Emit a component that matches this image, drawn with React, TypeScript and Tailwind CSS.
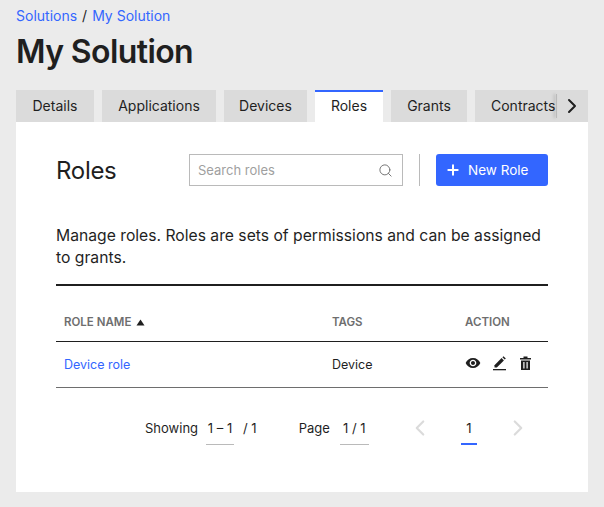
import { ChevronLeft, ChevronRight, Plus, Search } from "lucide-react";

function Tab({ label, width, active }: { label: string; width: string; active?: boolean }) {
  return (
    <div
      className={
        active
          ? `${width} h-8 shrink-0 flex items-center justify-center bg-white border-t-2 border-[#3366ff] text-[#1f1f1f] pb-[3px]`
          : `${width} h-8 shrink-0 flex items-center justify-center bg-[#dbdbdb] text-[#1f1f1f] pb-px`
      }
    >
      {label}
    </div>
  );
}

function App() {
  return (
    <div className="w-[604px] h-[507px] overflow-hidden bg-[#ebebeb] px-4 font-['Inter',sans-serif] text-[#1f1f1f]">
      <div className="pt-[7px] h-[26px] text-[14px] leading-[18px]">
        <span className="text-[#3366ff]">Solutions</span>
        <span className="mx-[5px]">/</span>
        <span className="text-[#3366ff]">My Solution</span>
      </div>
      <h1 className="mt-[4px] h-[60px] text-[32px] leading-[44px] font-semibold tracking-[-0.6px]">My Solution</h1>

      {/* tabs */}
      <div className="relative flex gap-2 text-[14px] w-[572px] overflow-hidden">
        <Tab label="Details" width="w-[78px]" />
        <Tab label="Applications" width="w-[114px]" />
        <Tab label="Devices" width="w-[83px]" />
        <Tab label="Roles" width="w-[68px]" active />
        <Tab label="Grants" width="w-[76px]" />
        <div className="w-[113px] h-8 shrink-0 flex items-center pl-4 pb-px bg-[#dbdbdb] overflow-hidden whitespace-nowrap">Contracts</div>
        <div className="absolute right-0 top-0 h-8 w-[32px] flex items-center justify-center bg-[#dbdbdb]">
          <div className="absolute left-0 top-[4px] h-[24px] w-px bg-[#bababa] shadow-[-2px_0_3px_rgba(0,0,0,0.25)]" />
          <ChevronRight size={24} strokeWidth={2} />
        </div>
      </div>

      {/* card */}
      <div className="w-[572px] h-[370px] bg-white px-10 pt-8">
        <div className="flex items-center h-8">
          <h2 className="mt-px text-[24px] leading-8 w-[133px] tracking-[-0.3px]">Roles</h2>
          <div className="w-[214px] h-8 flex items-center justify-between border border-[#bababa] pl-2 pr-[9px] text-[13px] text-[#9f9f9f]">
            <span className="mt-px">Search roles</span>
            <Search size={15} strokeWidth={1.5} className="text-[#6e6e6e]" />
          </div>
          <div className="ml-4 h-8 w-px bg-[#bababa]" />
          <button className="ml-4 w-[112px] h-8 flex items-center rounded-[3px] bg-[#3366ff] pl-[9px] text-[13.5px] text-white">
            <Plus size={16} strokeWidth={3} />
            <span className="ml-[7px] mt-px">New Role</span>
          </button>
        </div>

        <p className="mt-[39px] text-[15.7px] leading-[22px]">
          Manage roles. Roles are sets of permissions and can be assigned to grants.
        </p>

        <div className="mt-[15px] border-t-2 border-[#1f1f1f]">
          <div className="flex items-center h-[56px] pt-[18px] border-b border-[#1f1f1f] pl-2 text-[11.5px] font-semibold text-[#6e6e6e]">
            <div className="w-[268px] flex items-center">
              ROLE NAME
              <svg width="9" height="7" viewBox="0 0 9 7" className="ml-[5px]">
                <path d="M4.5 0.5 L8.5 6.5 L0.5 6.5 Z" fill="#1f1f1f" />
              </svg>
            </div>
            <div className="w-[133px]">TAGS</div>
            <div>ACTION</div>
          </div>
          <div className="flex items-center h-[46px] border-b border-[#6e6e6e] pl-2 text-[12.5px]">
            <div className="mt-[2px] w-[268px] text-[#3366ff]">Device role</div>
            <div className="mt-[2px] w-[133px]">Device</div>
            <div className="flex items-center gap-[11px] -mt-1">
              <svg width="16" height="16" viewBox="0 0 24 24" fill="#1f1f1f">
                <path d="M12 4.5C7 4.5 2.73 7.61 1 12c1.73 4.39 6 7.5 11 7.5s9.27-3.11 11-7.5c-1.73-4.39-6-7.5-11-7.5zM12 17c-2.76 0-5-2.24-5-5s2.24-5 5-5 5 2.24 5 5-2.24 5-5 5zm0-8c-1.66 0-3 1.34-3 3s1.34 3 3 3 3-1.34 3-3-1.34-3-3-3z" />
              </svg>
              <svg width="15" height="16" viewBox="0 0 15 16" fill="#1f1f1f">
                <path d="M2.5 10.2 9.6 3.1l2.3 2.3-7.1 7.1H2.500z" />
                <path d="M10.400 2.300 11.500 1.200 13.800 3.500 12.700 4.600z" />
                <rect x="1" y="14" width="13" height="1.300" />
              </svg>
              <svg width="15" height="16" viewBox="0 0 15 16" fill="#1f1f1f">
                <path d="M2 3h11v1.500H2zM5.500 1.500h4V3h-4z" />
                <path d="M3 5.500h9V15H3zM5.300 7v6.500h1.200V7zm3.200 0v6.500h1.200V7z" fillRule="evenodd" />
              </svg>
            </div>
          </div>
        </div>

        {/* pagination */}
        <div className="flex items-start mt-[30px] text-[13px] leading-[20px] text-[#1f1f1f]">
          <span className="ml-[89px]">Showing</span>
          <span className="ml-[8px] w-[28px] h-[27px] text-center border-b border-[#bababa] whitespace-nowrap">1 – 1</span>
          <span className="ml-[9px]">/ 1</span>
          <span className="ml-[42px]">Page</span>
          <span className="ml-[10px] w-[29px] h-[27px] text-center border-b border-[#bababa] whitespace-nowrap">1 / 1</span>
          <ChevronLeft size={26} strokeWidth={2} className="ml-[38px] -mt-[3px] text-[#dbdbdb]" />
          <span className="ml-[28px] w-4 h-[27px] text-center border-b-2 border-[#3366ff]">1</span>
          <ChevronRight size={26} strokeWidth={2} className="ml-[28px] -mt-[3px] text-[#dbdbdb]" />
        </div>
      </div>
    </div>
  );
}

export default App;
